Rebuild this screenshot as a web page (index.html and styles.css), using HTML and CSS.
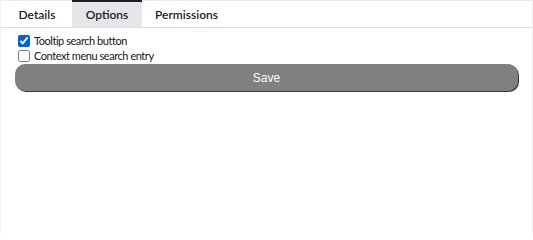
FILE: index.html
```html
<!DOCTYPE html>
<html lang="en">
<head>
<meta charset="utf-8">
<title>Options</title>
<link rel="stylesheet" href="styles.css">
</head>
<body>
<div class="page">
  <nav class="tabs">
    <div class="tab">Details</div>
    <div class="tab active">Options</div>
    <div class="tab">Permissions</div>
  </nav>
  <main class="panel">
    <label class="option"><input type="checkbox" checked><span>Tooltip search button</span></label>
    <label class="option"><input type="checkbox"><span>Context menu search entry</span></label>
    <button class="save" type="button">Save</button>
  </main>
</div>
</body>
</html>
```
FILE: styles.css
```css
html, body {
  margin: 0;
  padding: 0;
  background: #fff;
}
.page {
  height: 235px;
  box-sizing: border-box;
  border-left: 1px solid #f1f1f1;
  border-right: 1px solid #f1f1f1;
  font-family: "Lato", "Open Sans", sans-serif;
  color: #15141a;
}
.tabs {
  display: flex;
  height: 26px;
  padding-left: 1px;
  border-top: 1px solid #ececec;
  border-bottom: 1px solid #dcdcdc;
}
.tab {
  min-width: 70px;
  box-sizing: border-box;
  padding: 0 13px;
  text-align: center;
  font-size: 12px;
  font-weight: 600;
  line-height: 25px;
  border-top: 2px solid transparent;
  margin-top: -1px;
  color: #1c1b22;
}
.tab.active {
  background: #e6e6ea;
  border-top-color: #1c1b22;
}
.panel {
  display: flex;
  flex-direction: column;
  padding: 5px 14px 0 14px;
}
.option {
  display: flex;
  align-items: center;
  height: 15px;
  font-size: 11px;
  letter-spacing: -0.45px;
  color: #15141a;
}
.option input {
  width: 12px;
  height: 12px;
  margin: 0 4px 0 3px;
  accent-color: #0060df;
}
.save {
  margin-top: 1px;
  height: 27px;
  border: none;
  border-radius: 10px;
  background: #808080;
  color: #fff;
  font-family: "Liberation Sans", Arial, sans-serif;
  font-size: 12px;
  box-shadow: 1px 1px 0 #3a3a3a;
  padding: 0;
}
```
